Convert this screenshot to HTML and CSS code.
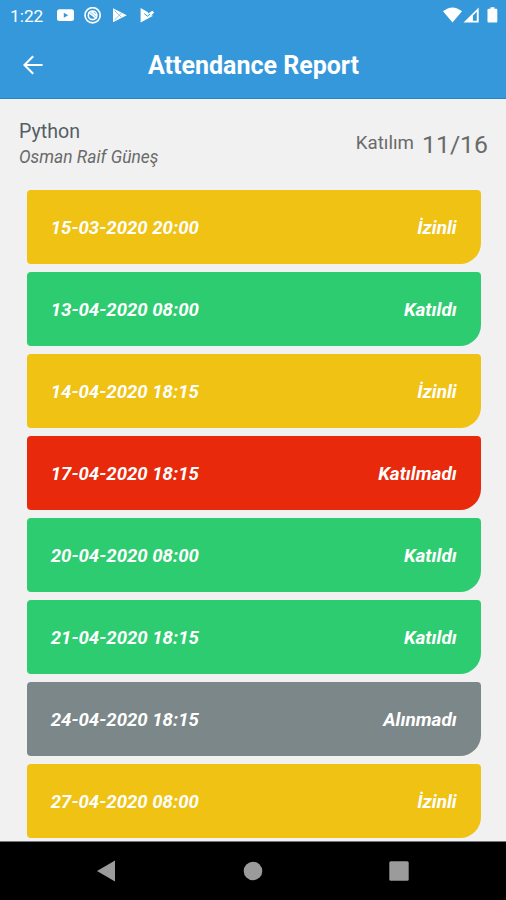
FILE: index.html
```html
<!DOCTYPE html>
<html lang="tr">
<head>
<meta charset="UTF-8">
<title>Attendance Report</title>
<link rel="stylesheet" href="styles.css">
</head>
<body>
<header class="top">
  <div class="status_bar">
    <span class="clock">1:22</span>
    <svg class="notifications" width="100" height="18" viewBox="0 0 100 18">
      <path fill="#fff" fill-rule="evenodd" d="M3.500 2.200h12q2.500 0 2.500 2.500v6.900q0 2.500-2.500 2.500h-12q-2.500 0-2.500-2.500V4.700q0-2.500 2.500-2.500zM7.800 5.700v5l4.400-2.500z"/>
      <g fill="none" stroke="#fff">
        <circle cx="36.600" cy="8.300" r="7.600" stroke-width="1.700"/>
        <circle cx="36.600" cy="8.300" r="4.300" stroke-width="1.600"/>
        <path d="M32.500 5.200l8 6.200M35.500 4.500l4.500 4" stroke-width="1.700"/>
      </g>
      <path fill="#fff" d="M57 1.200L70.800 8.300 57 15.200z"/>
      <path d="M58.500 3.500l7 7M58.500 13l7-7" stroke="#8fc4ea" stroke-width="1" fill="none"/>
      <path fill="#fff" d="M84.600 1L92 5.200l.4 1.200 3.800-2.600 2 1.800-3 2.800 2 .4L84.600 15.400z"/>
      <path d="M88.200 6.600l3.200 2.600 2.600-2" stroke="#3498db" stroke-width="1" fill="none"/>
    </svg>
    <svg class="system" width="55" height="18" viewBox="0 0 55 18">
      <path fill="#fff" d="M0 4.200Q9.500-3.400 19 4.200L9.500 15.600z"/>
      <path fill="#fff" fill-rule="evenodd" d="M20.500 15.600L35.700.4v15.200zM29.900 8.500v5.300h3.900V4.700z"/>
      <path fill="#fff" d="M47.500.300h4v1.500h1.800q1 0 1 1v11.800q0 1-1 1h-7.800q-1 0-1-1V2.800q0-1 1-1h2z"/>
    </svg>
  </div>
  <div class="title_bar">
    <svg class="back" width="20" height="20" viewBox="0 0 20 20">
      <path d="M19.600 10H1.600M10.200 1.200L1.400 10l8.800 8.800" fill="none" stroke="#fff" stroke-width="2.100"/>
    </svg>
    <h1>Attendance Report</h1>
  </div>
</header>

<section class="lesson">
  <div>
    <div class="lesson_name">Python</div>
    <div class="teacher">Osman Raif Güneş</div>
  </div>
  <div class="total">Katılım <span class="count">11/16</span></div>
</section>

<main class="list">
  <div class="row excused"><span>15-03-2020 20:00</span><span class="state">İzinli</span></div>
  <div class="row present"><span>13-04-2020 08:00</span><span class="state">Katıldı</span></div>
  <div class="row excused"><span>14-04-2020 18:15</span><span class="state">İzinli</span></div>
  <div class="row absent"><span>17-04-2020 18:15</span><span class="state">Katılmadı</span></div>
  <div class="row present"><span>20-04-2020 08:00</span><span class="state">Katıldı</span></div>
  <div class="row present"><span>21-04-2020 18:15</span><span class="state">Katıldı</span></div>
  <div class="row not_taken"><span>24-04-2020 18:15</span><span class="state">Alınmadı</span></div>
  <div class="row excused"><span>27-04-2020 08:00</span><span class="state">İzinli</span></div>
</main>

<nav class="nav_bar">
  <svg width="20" height="22" viewBox="0 0 20 22"><path fill="#9b9b9b" d="M1 11L19 .5v21z"/></svg>
  <svg width="20" height="20" viewBox="0 0 20 20"><circle cx="10" cy="10" r="9.300" fill="#9b9b9b"/></svg>
  <svg width="20" height="20" viewBox="0 0 20 20"><rect x=".3" y=".3" width="19.400" height="19.400" rx="1.500" fill="#9b9b9b"/></svg>
</nav>
</body>
</html>
```

FILE: styles.css
```css
* {
  box-sizing: border-box;
}

html, body {
  height: 100%;
  margin: 0;
}

body {
  display: flex;
  flex-direction: column;
  overflow: hidden;
  background: #f1f1f1;
  font-family: Roboto, "Liberation Sans", sans-serif;
}

svg {
  display: block;
  flex: none;
}

.top {
  height: 99px;
  flex: none;
  background: #3498db;
  border-bottom: 1px solid #2485c7;
  color: #fff;
}

.status_bar {
  display: flex;
  height: 32px;
  padding: 7px 8px 0 10px;
}

.clock {
  width: 46px;
  font-size: 17.3px;
  line-height: 18px;
}

.system {
  margin-left: auto;
}

.title_bar {
  display: grid;
  grid-template-columns: 20px 1fr 20px;
  align-items: center;
  height: 66px;
  padding: 0 22px 0 23px;
}

.title_bar h1 {
  margin: 2px 0 0;
  font-size: 25px;
  font-weight: 700;
  line-height: 30px;
  text-align: center;
}

.back {
  margin-top: -1px;
}

.lesson {
  display: flex;
  justify-content: space-between;
  flex: none;
  height: 91.300px;
  padding: 20px 18px 0 19px;
  color: #6a6a6a;
}

.lesson_name {
  font-size: 19.6px;
  line-height: 26px;
  color: #555f64;
}

.teacher {
  font-size: 17.400px;
  font-style: italic;
  line-height: 25px;
}

.total {
  display: flex;
  align-items: center;
  gap: 8px;
  height: 48px;
  font-size: 18.700px;
}

.count {
  padding-top: 2px;
  font-size: 24.800px;
}

.list {
  display: flex;
  flex-direction: column;
  gap: 7.9px;
  height: 650.700px;
  flex: none;
  padding: 0 25.300px 0 26.700px;
}

.row {
  display: flex;
  justify-content: space-between;
  align-items: baseline;
  flex: none;
  height: 74px;
  padding: 0 24px;
  border-radius: 4px 4px 21px 4px;
  color: #fff;
  font-size: 18.6px;
  font-style: italic;
  font-weight: 700;
  line-height: 76px;
}

.state {
  font-size: 18.9px;
}

.excused {
  background: #efc214;
}

.present {
  background: #2ecc71;
}

.absent {
  background: #e8290b;
}

.not_taken {
  background: #7b8788;
}

.nav_bar {
  display: flex;
  justify-content: space-between;
  align-items: center;
  flex: 1;
  padding: 0 97px 0 96px;
  border-top: 1px solid #777;
  background: #000;
}
```
